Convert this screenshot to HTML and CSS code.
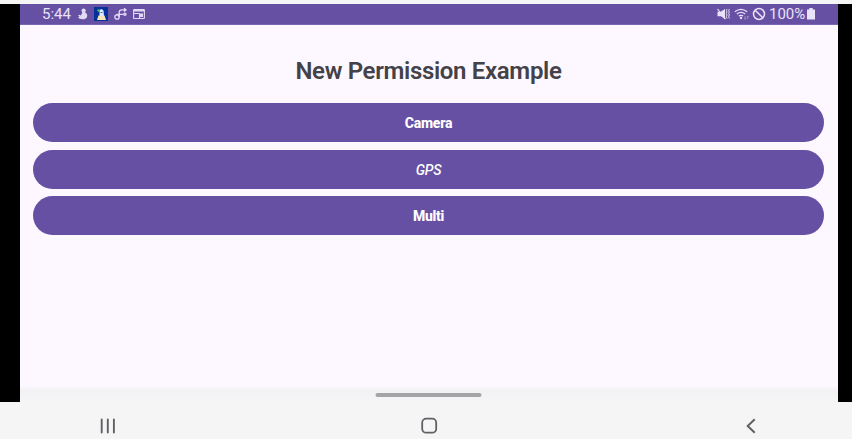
FILE: index.html
```html
<!DOCTYPE html>
<html lang="en">
<head>
<meta charset="utf-8">
<title>New Permission Example</title>
<link rel="stylesheet" href="styles.css">
</head>
<body>
<div class="device">
  <div class="screen">
    <header class="status">
      <span class="clock">5:44</span>
      <div class="notifications">
        <svg width="12" height="14" viewBox="0 0 12 14" fill="#e2daf5"><circle cx="6.600" cy="3.600" r="2.100"/><path d="M5.500 5h2.500l2 2.300c.8 2.500-.7 5-3.800 5-3 0-4.700-.8-5-2l1.400-.6L1 8.400l1.200-.6 1.800.7z"/></svg>
        <svg width="14" height="14" viewBox="0 0 14 14"><path fill="#06309a" d="M0 0h14v14H0z"/><path fill="#f8e5ba" d="M4.500 8.500h6l1.500 4.500H3z"/><path fill="#dce9ff" d="M5.500 3l2-1 2 1.500.5 5.500H5.500z"/><path fill="#55d85b" d="M3.500 2.500h2v2h-2z"/><path d="M6.500 5.500h2" stroke="#536fb1"/></svg>
        <svg width="14" height="14" viewBox="0 0 14 14" fill="none" stroke="#e2daf5" stroke-width="1.300"><circle cx="3" cy="10" r="2.200"/><path d="M5.200 10V5.500Q5.200 2.900 7.700 2.900h4M2.500 7.300h7.300M10 1.200l2 1.700-2 1.700"/><circle cx="10.900" cy="7.300" r="1.100"/></svg>
        <svg width="12" height="14" viewBox="0 0 12 14" fill="none" stroke="#e2daf5" stroke-width="1.100"><rect x=".6" y="2.500" width="10.800" height="9" rx=".6"/><path d="M.6 3.700h10.800" stroke-width="1.600"/><path d="M.6 6.500h6M6.500 6.500v5"/><path fill="#e2daf5" d="M7.500 7h2v2.500h-2z"/></svg>
      </div>
      <div class="system">
        <svg width="13" height="14" viewBox="0 0 13 14" fill="none" stroke="#e9e2f8"><path fill="#e9e2f8" stroke="none" d="M.5 4.800h3L8 2v10.300L4 9.300H.5z"/><path d="M.5 2l8 10.200" stroke-width="1.200"/><path d="M10 2l-.6 1.500.6 1.500-.6 1.500.6 1.500-.6 1.500.6 2M12.300 2l-.6 1.500.6 1.500-.6 1.500.6 1.500-.6 1.500.6 2"/></svg>
        <svg width="16" height="14" viewBox="0 0 16 14" fill="none" stroke="#e9e2f8" stroke-width="1.300"><path d="M.8 4.800q6.200-5 12.400 0M2.900 7q4.100-3.300 8.200 0M4.900 9.100q2.100-1.600 4.200 0"/><circle cx="7" cy="11" r="1.200" fill="#e9e2f8" stroke="none"/><path d="M11 9v3.300m-1-1.200 1 1.200 1-1.200M13.700 12.300V9m-1 1.200 1-1.200 1 1.200" stroke="#a99ad0" stroke-width=".7"/></svg>
        <svg width="14" height="14" viewBox="0 0 14 14" fill="none" stroke="#e9e2f8" stroke-width="1.500"><circle cx="7" cy="7" r="5.500"/><path d="M3.200 3.200l7.600 7.600"/></svg>
        <span class="percent">100%</span>
        <svg width="8" height="14" viewBox="0 0 8 14" fill="#e9e2f8"><path d="M2.300 1h3.400v1.500H8V12.500H0V2.500h2.300z"/></svg>
      </div>
    </header>
    <main class="content">
      <h1 class="title">New Permission Example</h1>
      <button class="action">Camera</button>
      <button class="action italic">GPS</button>
      <button class="action">Multi</button>
    </main>
    <div class="dock"><div class="handle"></div></div>
  </div>
</div>
<nav class="navigation">
  <svg width="18" height="18" viewBox="0 0 18 18" stroke="#626066" stroke-width="1.900" stroke-linecap="round"><path d="M2.700 2.500v13M8.800 2.500v13M14.900 2.500v13"/></svg>
  <svg width="18" height="18" viewBox="0 0 18 18" fill="none" stroke="#626066" stroke-width="1.800"><rect x="1.200" y="1.700" width="14" height="14" rx="4"/></svg>
  <svg width="18" height="18" viewBox="0 0 18 18" fill="none" stroke="#626066" stroke-width="2"><path d="M12.700 2.300L5.700 9l7 6.700"/></svg>
</nav>
</body>
</html>
```
FILE: styles.css
```css
* { box-sizing: border-box; }
body {
  margin: 0;
  height: 439px;
  overflow: hidden;
  padding-top: 4px;
  background: #f5f5f6;
  font-family: Roboto, sans-serif;
}
svg { display: block; flex: none; }
.device { height: 398px; padding: 0 14px 0 20px; background: #000; }
.screen { display: flex; flex-direction: column; height: 398px; background: #fdf8ff; }
.status {
  display: flex;
  align-items: center;
  flex: none;
  height: 21px;
  padding: 0 23px 0 22px;
  background: #6650a4;
  border-bottom: 1px solid #7b68b1;
  color: #e9e2f8;
  font-size: 15px;
  line-height: 20px;
}
.clock { width: 35px; }
.notifications { display: flex; gap: 5.400px; }
.system { display: flex; margin-left: auto; align-items: center; }
.system svg + svg { margin-left: 4px; }
.system svg:nth-of-type(3) { margin-left: 2px; }
.percent { width: 38px; margin-left: 3px; }
.system .percent + svg { margin-left: 0; }
.content { display: flex; flex-direction: column; flex: 1; padding: 31px 14px 0 13px; }
.title {
  margin: 0 0 17px;
  height: 30px;
  color: #444148;
  font-size: 24px;
  font-weight: 600;
  line-height: 30px;
  letter-spacing: -0.330px;
  text-align: center;
}
.action {
  flex: none;
  height: 39px;
  margin: 0 0 7.700px;
  padding: 1px 0 0;
  border: 0;
  border-radius: 20px;
  background: #6650a4;
  color: #fff;
  font: 800 14px/20px Roboto, sans-serif;
  letter-spacing: -0.250px;
}
.italic { font-style: italic; font-weight: 500; }
.dock {
  flex: none;
  height: 15px;
  padding-top: 6px;
  background: linear-gradient(#faf7fb, #f2f1f4 4px, #f5f5f6);
}
.handle { width: 106px; height: 4px; margin: 0 auto; border-radius: 2px; background: #a5a4a6; transform: translateX(-0.500px); }
.navigation { display: flex; justify-content: space-between; padding: 15px 92px 0 99px; }
```
